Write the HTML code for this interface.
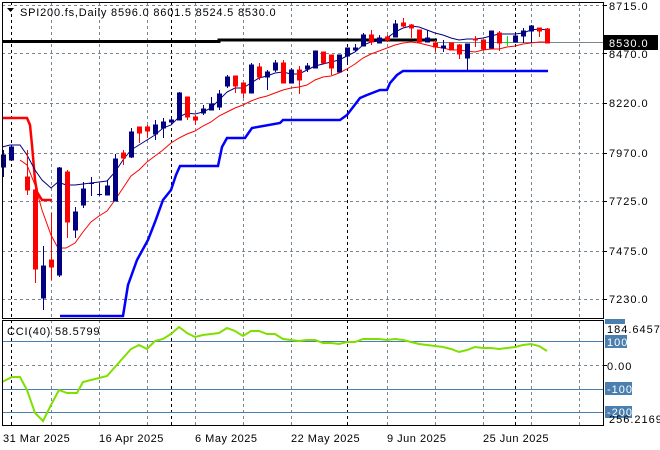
<!DOCTYPE html>
<html><head><meta charset="utf-8"><style>
html,body{margin:0;padding:0;background:#fff;}
svg{display:block;font-family:"Liberation Sans",sans-serif;font-size:11px;}
.t{letter-spacing:0.8px}
.p{letter-spacing:1px}
.d{letter-spacing:0.5px}
</style></head><body>
<svg width="660" height="450" viewBox="0 0 660 450" xmlns="http://www.w3.org/2000/svg">
<rect width="660" height="450" fill="#fff"/>
<g stroke="#7a8592" stroke-dasharray="3,3" stroke-width="1">
<line x1="2" y1="53.5" x2="603" y2="53.5"/><line x1="2" y1="103.5" x2="603" y2="103.5"/>
<line x1="2" y1="153.5" x2="603" y2="153.5"/><line x1="2" y1="201.5" x2="603" y2="201.5"/>
<line x1="2" y1="251.5" x2="603" y2="251.5"/><line x1="2" y1="299.5" x2="603" y2="299.5"/>
<line x1="2" y1="5.5" x2="603" y2="5.5"/>
<line x1="51.5" y1="2" x2="51.5" y2="318"/><line x1="99.5" y1="2" x2="99.5" y2="318"/>
<line x1="147.5" y1="2" x2="147.5" y2="318"/><line x1="195.5" y1="2" x2="195.5" y2="318"/>
<line x1="243.5" y1="2" x2="243.5" y2="318"/><line x1="291.5" y1="2" x2="291.5" y2="318"/>
<line x1="387.5" y1="2" x2="387.5" y2="318"/><line x1="435.5" y1="2" x2="435.5" y2="318"/>
<line x1="483.5" y1="2" x2="483.5" y2="318"/><line x1="531.5" y1="2" x2="531.5" y2="318"/>
<line x1="579.5" y1="2" x2="579.5" y2="318"/>
<line x1="51.5" y1="320" x2="51.5" y2="425"/><line x1="99.5" y1="320" x2="99.5" y2="425"/>
<line x1="147.5" y1="320" x2="147.5" y2="425"/><line x1="195.5" y1="320" x2="195.5" y2="425"/>
<line x1="243.5" y1="320" x2="243.5" y2="425"/><line x1="291.5" y1="320" x2="291.5" y2="425"/>
<line x1="387.5" y1="320" x2="387.5" y2="425"/><line x1="435.5" y1="320" x2="435.5" y2="425"/>
<line x1="483.5" y1="320" x2="483.5" y2="425"/><line x1="531.5" y1="320" x2="531.5" y2="425"/>
<line x1="579.5" y1="320" x2="579.5" y2="425"/>
<line x1="2" y1="365.5" x2="603" y2="365.5"/>
</g>
<g stroke="#000" stroke-dasharray="3,3" stroke-width="1">
<line x1="11.5" y1="2" x2="11.5" y2="318"/><line x1="171.5" y1="2" x2="171.5" y2="318"/>
<line x1="347.5" y1="2" x2="347.5" y2="318"/><line x1="515.5" y1="2" x2="515.5" y2="318"/>
<line x1="11.5" y1="320" x2="11.5" y2="425"/><line x1="171.5" y1="320" x2="171.5" y2="425"/>
<line x1="347.5" y1="320" x2="347.5" y2="425"/><line x1="515.5" y1="320" x2="515.5" y2="425"/>
</g>
<g stroke="#4a7fb0" stroke-width="1">
<line x1="2" y1="341.5" x2="603" y2="341.5"/><line x1="2" y1="389.5" x2="603" y2="389.5"/><line x1="2" y1="412.5" x2="603" y2="412.5"/>
</g>
<line x1="437" y1="42.5" x2="603" y2="42.5" stroke="#7a8592"/>
<polyline points="2,41.5 219,41.5 219,40 437,40" fill="none" stroke="#000" stroke-width="3"/>
<polyline points="2,118 27,118 30,125 32,145 35,180 37,192 42,200 52,200" fill="none" stroke="#f00" stroke-width="2.5"/>
<polyline points="60,316 123,316 128,285 137,260 148,240 155,222 163,200 171,190 176,175 180,166 218,166 222,147 227,138 245,138 252,128 280,123 283,120 340,120 347,115 360,98 367,95 380,90 387,90 390,83 397,75 403,71 548,71" fill="none" stroke="#0000ff" stroke-width="2.5"/>
<polyline points="20,160 27,165 35,185 42,210 51,235 58,248 66,248 75,243 83,232 91,222 99,216 107,211 115,200 123,188 131,176 139,170 147,162 155,156 163,150 171,143 179,138 187,134 195,131 203,126 211,122 219,116 227,112 235,108 243,105 251,101 259,98 267,96 275,93 283,90 291,88 299,87 307,85 315,80 323,77 331,76 339,73 347,69 355,64 363,58 371,54 379,51 387,48 395,45 403,43 411,42 419,43 427,45 435,47 443,48 451,50 459,50 467,51 475,52 483,50 491,49 499,49 507,47 515,46 523,44 531,43 539,42 547,42" fill="none" stroke="#f00" stroke-width="1"/>
<polyline points="2,147 10,145 20,145 27,155 35,170 42,180 51,188 58,182 66,185 75,185 83,184 91,183 99,182 107,181 115,172 123,160 131,150 139,145 147,140 155,135 163,128 171,125 179,117 187,113 195,114 203,112 211,108 219,100 227,92 235,88 243,88 251,83 259,78 267,76 275,73 283,72 291,74 299,74 307,70 315,66 323,64 331,62 339,60 347,56 355,52 363,45 371,42 379,41 387,38 395,32 403,28 411,26 419,27 427,30 435,33 443,35 451,38 459,40 467,39 475,39 483,38 491,36 499,34 507,34 515,34 523,33 531,30 539,29 547,30" fill="none" stroke="#000080" stroke-width="1"/>
<g>
<g fill="#000080" stroke="#000080">
<line x1="3.5" y1="150" x2="3.5" y2="177"/><rect x="1.5" y="155" width="4" height="12"/>
<line x1="11.5" y1="145" x2="11.5" y2="160"/><rect x="9.5" y="147" width="4" height="13"/>
<line x1="43.5" y1="246" x2="43.5" y2="310"/><rect x="41.5" y="266" width="4" height="32"/>
<line x1="59.5" y1="167" x2="59.5" y2="277"/><rect x="57.5" y="168" width="4" height="107"/>
<line x1="75.5" y1="207" x2="75.5" y2="238"/><rect x="73.5" y="212" width="4" height="18"/>
<line x1="83.5" y1="182" x2="83.5" y2="208"/><rect x="81.5" y="189" width="4" height="16"/>
<line x1="91.5" y1="177" x2="91.5" y2="196"/><line x1="89" y1="183.5" x2="94" y2="183.5"/>
<line x1="99.5" y1="183" x2="99.5" y2="196"/><line x1="97" y1="194.5" x2="102" y2="194.5"/>
<line x1="107.5" y1="180" x2="107.5" y2="195"/><rect x="105.5" y="186" width="4" height="9"/>
<line x1="115.5" y1="154" x2="115.5" y2="201"/><rect x="113.5" y="159" width="4" height="42"/>
<line x1="131.5" y1="128" x2="131.5" y2="158"/><rect x="129.5" y="132" width="4" height="25"/>
<line x1="155.5" y1="120" x2="155.5" y2="140"/><rect x="153.5" y="125" width="4" height="9"/>
<line x1="163.5" y1="118" x2="163.5" y2="138"/><rect x="161.5" y="122" width="4" height="6"/>
<line x1="171.5" y1="117" x2="171.5" y2="124"/><rect x="169.5" y="120" width="4" height="2"/>
<line x1="179.5" y1="92" x2="179.5" y2="120"/><rect x="177.5" y="93" width="4" height="27"/>
<line x1="203.5" y1="105" x2="203.5" y2="115"/><rect x="201.5" y="109" width="4" height="4"/>
<line x1="211.5" y1="97" x2="211.5" y2="110"/><rect x="209.5" y="104" width="4" height="6"/>
<line x1="219.5" y1="90" x2="219.5" y2="110"/><rect x="217.5" y="94" width="4" height="13"/>
<line x1="227.5" y1="75" x2="227.5" y2="88"/><rect x="225.5" y="77" width="4" height="9"/>
<line x1="251.5" y1="63" x2="251.5" y2="93"/><rect x="249.5" y="65" width="4" height="28"/>
<line x1="267.5" y1="70" x2="267.5" y2="90"/><rect x="265.5" y="72" width="4" height="5"/>
<line x1="275.5" y1="60" x2="275.5" y2="72"/><rect x="273.5" y="63" width="4" height="7"/>
<line x1="291.5" y1="68" x2="291.5" y2="83"/><rect x="289.5" y="70" width="4" height="13"/>
<line x1="307.5" y1="63" x2="307.5" y2="72"/><rect x="305.5" y="66" width="4" height="3"/>
<line x1="315.5" y1="51" x2="315.5" y2="68"/><rect x="313.5" y="51" width="4" height="17"/>
<line x1="339.5" y1="55" x2="339.5" y2="72"/><rect x="337.5" y="55" width="4" height="17"/>
<line x1="347.5" y1="48" x2="347.5" y2="65"/><rect x="345.5" y="48" width="4" height="8"/>
<line x1="355.5" y1="44" x2="355.5" y2="52"/><rect x="353.5" y="48" width="4" height="2"/>
<line x1="363.5" y1="33" x2="363.5" y2="46"/><rect x="361.5" y="35" width="4" height="11"/>
<line x1="379.5" y1="35" x2="379.5" y2="43"/><rect x="377.5" y="38" width="4" height="5"/>
<line x1="395.5" y1="20" x2="395.5" y2="37"/><rect x="393.5" y="24" width="4" height="13"/>
<line x1="427.5" y1="30" x2="427.5" y2="42"/><rect x="425.5" y="38" width="4" height="4"/>
<line x1="443.5" y1="40" x2="443.5" y2="52"/><rect x="441.5" y="46" width="4" height="2"/>
<line x1="467.5" y1="44" x2="467.5" y2="70"/><rect x="465.5" y="44" width="4" height="14"/>
<line x1="491.5" y1="31" x2="491.5" y2="48"/><rect x="489.5" y="31" width="4" height="17"/>
<line x1="515.5" y1="34" x2="515.5" y2="42"/><rect x="513.5" y="36" width="4" height="6"/>
<line x1="523.5" y1="28" x2="523.5" y2="43"/><rect x="521.5" y="31" width="4" height="5"/>
<line x1="531.5" y1="25" x2="531.5" y2="43"/><rect x="529.5" y="26" width="4" height="5"/>
</g>
<g fill="#f00" stroke="#f00">
<line x1="27.5" y1="150" x2="27.5" y2="195"/><rect x="25.5" y="177" width="4" height="13"/>
<line x1="35.5" y1="180" x2="35.5" y2="283"/><rect x="33.5" y="190" width="4" height="79"/>
<line x1="51.5" y1="213" x2="51.5" y2="280"/><rect x="49.5" y="260" width="4" height="7"/>
<line x1="67.5" y1="170" x2="67.5" y2="238"/><rect x="65.5" y="172" width="4" height="50"/>
<line x1="123.5" y1="150" x2="123.5" y2="165"/><rect x="121.5" y="153" width="4" height="5"/>
<line x1="139.5" y1="127" x2="139.5" y2="143"/><rect x="137.5" y="127" width="4" height="6"/>
<line x1="147.5" y1="125" x2="147.5" y2="138"/><rect x="145.5" y="127" width="4" height="4"/>
<line x1="187.5" y1="97" x2="187.5" y2="120"/><rect x="185.5" y="97" width="4" height="20"/>
<line x1="195.5" y1="115" x2="195.5" y2="125"/><rect x="193.5" y="117" width="4" height="3"/>
<line x1="235.5" y1="76" x2="235.5" y2="93"/><rect x="233.5" y="76" width="4" height="10"/>
<line x1="243.5" y1="83" x2="243.5" y2="98"/><rect x="241.5" y="83" width="4" height="10"/>
<line x1="259.5" y1="63" x2="259.5" y2="80"/><rect x="257.5" y="67" width="4" height="10"/>
<line x1="283.5" y1="60" x2="283.5" y2="83"/><rect x="281.5" y="63" width="4" height="20"/>
<line x1="299.5" y1="66" x2="299.5" y2="94"/><rect x="297.5" y="70" width="4" height="10"/>
<line x1="323.5" y1="52" x2="323.5" y2="63"/><rect x="321.5" y="52" width="4" height="11"/>
<line x1="331.5" y1="55" x2="331.5" y2="75"/><rect x="329.5" y="55" width="4" height="13"/>
<line x1="371.5" y1="30" x2="371.5" y2="45"/><rect x="369.5" y="35" width="4" height="7"/>
<line x1="387.5" y1="35" x2="387.5" y2="42"/><rect x="385.5" y="37" width="4" height="3"/>
<line x1="403.5" y1="18" x2="403.5" y2="28"/><rect x="401.5" y="23" width="4" height="3"/>
<line x1="411.5" y1="24" x2="411.5" y2="38"/><rect x="409.5" y="25" width="4" height="3"/>
<line x1="419.5" y1="30" x2="419.5" y2="42"/><rect x="417.5" y="30" width="4" height="12"/>
<line x1="435.5" y1="40" x2="435.5" y2="52"/><rect x="433.5" y="43" width="4" height="4"/>
<line x1="451.5" y1="43" x2="451.5" y2="50"/><rect x="449.5" y="43" width="4" height="7"/>
<line x1="459.5" y1="44" x2="459.5" y2="59"/><rect x="457.5" y="45" width="4" height="9"/>
<line x1="475.5" y1="36" x2="475.5" y2="47"/><rect x="473.5" y="39" width="4" height="1"/>
<line x1="483.5" y1="40" x2="483.5" y2="49"/><rect x="481.5" y="40" width="4" height="9"/>
<line x1="499.5" y1="31" x2="499.5" y2="51"/><rect x="497.5" y="33" width="4" height="10"/>
<line x1="539.5" y1="28" x2="539.5" y2="37"/><rect x="537.5" y="28" width="4" height="3"/>
<line x1="547.5" y1="28" x2="547.5" y2="43"/><rect x="545.5" y="29" width="4" height="14"/>
</g>
<g stroke="#00e000"><line x1="507.5" y1="36" x2="507.5" y2="46"/><line x1="505" y1="42.5" x2="510" y2="42.5"/></g>
</g>
<polyline points="2,382 12,377 20,377 27,390 35,413 43,421 51,405 59,390 67,393 77,393 83,382 91,380 99,378 107,376 115,367 123,358 131,349 139,345 147,349 155,341 163,339 171,334 179,327 187,333 195,337 203,335 211,334 219,333 227,328 235,331 243,336 251,331 259,331 267,334 275,334 283,339 291,340 299,341 307,340 315,340 323,343 331,343 339,344 347,342 355,342 363,339 371,339 379,339 387,340 395,339 403,340 411,342 419,344 427,345 435,346 443,347 451,349 459,352 467,350 475,347 483,348 491,348 499,349 507,348 515,347 523,345 531,344 539,346 547,351" fill="none" stroke="#7fe000" stroke-width="2"/>
<rect x="2.5" y="2.5" width="601" height="316" fill="none" stroke="#000"/>
<rect x="2.5" y="320.5" width="601" height="105" fill="none" stroke="#000"/>
<g stroke="#000"><line x1="603" y1="5.5" x2="607" y2="5.5"/><line x1="603" y1="53.5" x2="607" y2="53.5"/><line x1="603" y1="103.5" x2="607" y2="103.5"/><line x1="603" y1="153.5" x2="607" y2="153.5"/><line x1="603" y1="201.5" x2="607" y2="201.5"/><line x1="603" y1="251.5" x2="607" y2="251.5"/><line x1="603" y1="299.5" x2="607" y2="299.5"/><line x1="603" y1="365.5" x2="607" y2="365.5"/></g>
<path d="M7,8 L14,8 L10.5,12 Z" fill="#000"/>
<text class="t" x="20" y="16" fill="#000">SPI200.fs,Daily  8596.0 8601.5 8524.5 8530.0</text>
<text class="t" x="7" y="335" fill="#000">CCI(40) 58.5799</text>
<g fill="#000" class="p">
<text x="609" y="10">8715.0</text>
<text x="609" y="58">8470.0</text>
<text x="609" y="107">8220.0</text>
<text x="609" y="157">7970.0</text>
<text x="609" y="205">7725.0</text>
<text x="609" y="255">7475.0</text>
<text x="609" y="303">7230.0</text>
</g>
<rect x="604" y="35" width="54" height="15" fill="#000"/>
<text class="p" x="609" y="47" fill="#fff">8530.0</text>
<rect x="605" y="319" width="20" height="5" fill="#4a7fb0"/>
<text class="p" x="607" y="333" fill="#000">184.6457</text>
<rect x="605" y="335" width="22" height="13" fill="#4a7fb0"/><text class="p" x="607" y="346" fill="#fff">100</text>
<text class="p" x="607" y="370" fill="#000">0.00</text>
<rect x="605" y="382" width="27" height="13" fill="#4a7fb0"/><text class="p" x="607" y="393" fill="#fff">-100</text>
<rect x="605" y="406" width="27" height="12" fill="#4a7fb0"/><text class="p" x="607" y="416" fill="#fff">-200</text>
<text class="p" x="609" y="423" fill="#000">256.2169</text>
<g fill="#000" class="d">
<text x="3" y="442">31 Mar 2025</text>
<text x="99" y="442">16 Apr 2025</text>
<text x="195" y="442">6 May 2025</text>
<text x="291" y="442">22 May 2025</text>
<text x="387" y="442">9 Jun 2025</text>
<text x="483" y="442">25 Jun 2025</text>
</g>
</svg>
</body></html>
